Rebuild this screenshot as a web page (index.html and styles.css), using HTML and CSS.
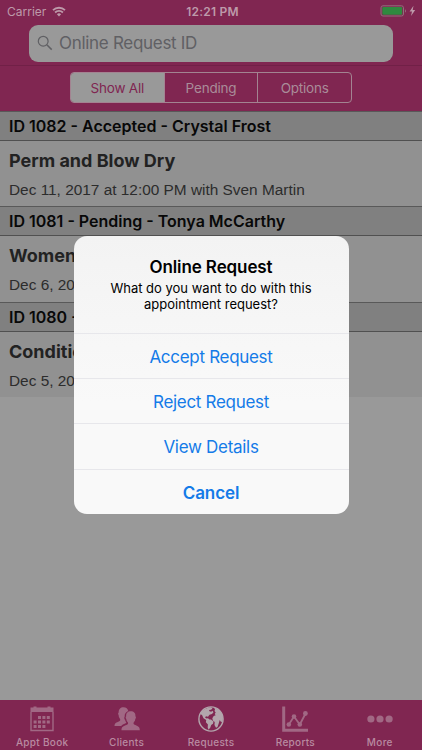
FILE: index.html
```html
<!DOCTYPE html>
<html lang="en">
<head>
    <meta charset="UTF-8">
    <meta name="viewport" content="width=device-width, initial-scale=1.0">
    <title>Online Requests</title>
    <link rel="stylesheet" href="styles.css">
</head>
<body>
    <div class="screen">
        <header class="header">
            <div class="status-bar">
                <div class="status-left">
                    <span class="carrier">Carrier</span>
                    <svg class="wifi" viewBox="0 0 14 11" width="14" height="11">
                        <path d="M1 4.2a8.6 8.6 0 0 1 12 0M3.1 6.5a5.5 5.5 0 0 1 7.8 0" fill="none" stroke="currentColor" stroke-width="1.8"/>
                        <path d="M7 10.5L4.9 8.3a3 3 0 0 1 4.2 0z" fill="currentColor"/>
                    </svg>
                </div>
                <span class="time">12:21 PM</span>
                <div class="status-right">
                    <svg viewBox="0 0 38 12" width="38" height="12">
                        <rect x="1" y=".8" width="22.5" height="10.2" rx="2" fill="none" stroke="#916f7c"/>
                        <rect x="2.3" y="2.1" width="19.9" height="7.6" rx="1" fill="#2f893f"/>
                        <path d="M25 4.2c1.3.6 1.3 2.8 0 3.4z" fill="#916f7c"/>
                        <path d="M33.5.8L29.6 6.5H32L31 11l4.2-6h-2.5z" fill="currentColor"/>
                    </svg>
                </div>
            </div>
            <div class="search">
                <svg class="search-icon" viewBox="0 0 16 16" width="16" height="16">
                    <circle cx="6.2" cy="6.2" r="4.9" fill="none" stroke="currentColor" stroke-width="1.2"/>
                    <path d="M9.8 9.8l4.9 4.8" stroke="currentColor" stroke-width="1.5"/>
                </svg>
                <span class="placeholder">Online Request ID</span>
            </div>
            <div class="filter-bar">
                <div class="segments">
                    <div class="segment active"><span>Show All</span></div>
                    <div class="segment"><span>Pending</span></div>
                    <div class="segment"><span>Options</span></div>
                </div>
            </div>
        </header>

        <main class="list">
            <h2 class="section">ID 1082 - Accepted - Crystal Frost</h2>
            <div class="row">
                <h3>Perm and Blow Dry</h3>
                <p>Dec 11, 2017 at 12:00 PM with Sven Martin</p>
            </div>
            <h2 class="section">ID 1081 - Pending - Tonya McCarthy</h2>
            <div class="row">
                <h3>Women</h3>
                <p>Dec 6, 20</p>
            </div>
            <h2 class="section">ID 1080 -</h2>
            <div class="row">
                <h3>Conditio</h3>
                <p>Dec 5, 20</p>
            </div>
        </main>

        <nav class="tab-bar">
            <div class="tab">
                <svg viewBox="0 0 26 26" width="26" height="26">
                    <path d="M1.5 1.5h3V.5h3v1h11v-1h3v1h3V6h-23z" fill="currentColor"/>
                    <path d="M2 6v18.5h22V6" fill="none" stroke="currentColor" stroke-width="1.4"/>
                    <path d="M9 10h3v3H9zm4.4 0h3v3h-3zm4.4 0h3v3h-3zM4.6 14.5h3v3h-3zm4.4 0h3v3H9zm4.4 0h3v3h-3zm4.4 0h3v3h-3zM4.6 19h3v3h-3zM9 19h3v3H9zm4.4 0h3v3h-3z" fill="currentColor"/>
                </svg>
                <span>Appt Book</span>
            </div>
            <div class="tab">
                <svg viewBox="0 0 26 26" width="26" height="26">
                    <path d="M.5 20c0-3 1.8-3.5 4.8-4.8 1-.5 1.3-1.5.6-2.5-.9-1.2-1.3-2.5-1.3-3.8-.7-.5-.7-2 .1-2.4C4.5 3.2 6.5 1.2 9.5 1.2c2.6 0 4.4 1.3 4.7 3.8-2.4 1-3.8 3-3.5 5.5-.7.9-.5 2.6.4 3.4.2 1 .6 1.8 1.2 2.5-.1 1.1-3.8 1.4-5 3.6z" fill="currentColor"/>
                    <path d="M7.5 24.2c0-3.3 1.8-4.1 5.4-5.4 1.4-.5 1.5-1.8.7-2.7-.8-1-1.2-2.1-1.3-3.2-.8-.5-.9-2.1-.1-2.6-.4-3 1.5-5 4.6-5s5 2 4.6 5c.8.5.7 2.1-.1 2.6-.1 1.1-.5 2.2-1.3 3.2-.8.9-.7 2.2.7 2.7 3.3 1.3 5.1 2.1 5.1 5.4z" fill="currentColor"/>
                </svg>
                <span>Clients</span>
            </div>
            <div class="tab selected">
                <svg viewBox="0 0 26 26" width="26" height="26">
                    <circle cx="13" cy="13" r="12.1" fill="none" stroke="currentColor" stroke-width="1.4"/>
                    <path d="M2 8C4 4 8.500 1.500 13 1.200l1.500 1.300-1.500 1.300-2 .2.500 1.300 1.700.4 1.300-1 1 1.500-1.500 1.800-2.500.7-1.500 2-2-.5-1 1.300 1.500 1 1.500-.3 1.500 1.200H13l2.500 2.200-.5 2.200-1.800 1.200-1 2.700-1.700 2-.8-2.200.2-3-2-2.300.3-2.300-2.700-1.700L4 9z" fill="currentColor"/>
                    <path d="M16 1.500c4.500 1 8.500 5 9 10l-.3 4-1.700.5-1.300-2-1 3.500-1.200 3.500-1.500.8-1.500-2.800.2-3-1.700-1.300-.7-2.500 1.400-2.200 2-.7-1-1.300 1-1.500-1.200-1.500.5-1.500z" fill="currentColor"/>
                </svg>
                <span>Requests</span>
            </div>
            <div class="tab">
                <svg viewBox="0 0 26 26" width="26" height="26">
                    <path d="M1.700.5v23.800H26" fill="none" stroke="currentColor" stroke-width="3"/>
                    <path d="M6.800 18.500l5.200-8 5.800 8L23.600 7.500" fill="none" stroke="currentColor" stroke-width="1.800"/>
                    <circle cx="6.800" cy="18.500" r="2.300" fill="currentColor"/>
                    <circle cx="12" cy="10.500" r="2.300" fill="currentColor"/>
                    <circle cx="17.800" cy="18.500" r="2.300" fill="currentColor"/>
                    <circle cx="23.400" cy="7.500" r="2.400" fill="currentColor"/>
                </svg>
                <span>Reports</span>
            </div>
            <div class="tab">
                <svg viewBox="0 0 26 26" width="26" height="26">
                    <circle cx="3.900" cy="13" r="3.600" fill="currentColor"/>
                    <circle cx="13" cy="13" r="3.600" fill="currentColor"/>
                    <circle cx="22.100" cy="13" r="3.600" fill="currentColor"/>
                </svg>
                <span>More</span>
            </div>
        </nav>
    </div>

    <div class="overlay">
        <div class="alert">
            <div class="alert-text">
                <h1>Online Request</h1>
                <p>What do you want to do with this<br>appointment request?</p>
            </div>
            <button type="button">Accept Request</button>
            <button type="button">Reject Request</button>
            <button type="button">View Details</button>
            <button type="button" class="cancel">Cancel</button>
        </div>
    </div>
</body>
</html>
```
FILE: styles.css
```css
* {
    box-sizing: border-box;
}
body {
    font-family: Inter, "Liberation Sans", sans-serif;
    margin: 0;
    overflow: hidden;
}
h1, h2, h3, p {
    margin: 0;
    white-space: nowrap;
}
svg {
    display: block;
    flex: none;
}
.screen {
    display: flex;
    flex-direction: column;
    width: 422px;
    height: 750px;
    background-color: #999;
}
.header {
    height: 110.6px;
    background-color: #802651;
}
.status-bar {
    display: grid;
    grid-template-columns: 1fr auto 1fr;
    align-items: center;
    height: 24px;
    padding: 0 4px 2px 7px;
    color: #bd9aaa;
    font-size: 12px;
}
.status-left {
    display: flex;
    align-items: center;
    gap: 6px;
}
.time {
    font-weight: 600;
    letter-spacing: 0.2px;
}
.status-right {
    display: flex;
    justify-content: flex-end;
}
.search {
    display: flex;
    align-items: center;
    gap: 6px;
    width: 364px;
    height: 37px;
    margin: 0.5px 0 0 29px;
    padding-left: 8px;
    border-radius: 9px;
    background-color: #999;
    color: #606064;
    font-size: 17px;
    letter-spacing: -0.3px;
}
.filter-bar {
    display: flex;
    justify-content: center;
    margin-top: 3.5px;
    padding-top: 6px;
    border-top: 1px solid #712047;
}
.segments {
    display: flex;
    width: 282px;
    height: 31px;
    border: 1px solid #a38391;
    border-radius: 4px;
    overflow: hidden;
}
.segment {
    display: flex;
    flex: 1;
    align-items: center;
    justify-content: center;
    color: #a98c99;
    font-size: 13.5px;
    letter-spacing: -0.2px;
}
.segment + .segment {
    border-left: 1px solid #a38391;
}
.segment.active {
    background-color: #999;
    color: #802651;
}
.list {
    flex: 1;
}
.section {
    display: flex;
    align-items: center;
    height: 30px;
    padding-left: 9px;
    border-top: 1.5px solid #595959;
    border-bottom: 1.5px solid #505050;
    background-color: #808080;
    color: #080808;
    font-size: 16px;
    font-weight: 600;
}
.row {
    height: 65.6px;
    padding: 9px 0 0 9px;
    background-color: #919191;
}
.row h3 {
    color: #222;
    font-size: 18px;
    font-weight: 700;
    line-height: 22px;
}
.row p {
    margin-top: 8px;
    color: #2c2c2c;
    font-family: "Liberation Sans", sans-serif;
    font-size: 15.4px;
    line-height: 20px;
}
.tab-bar {
    display: flex;
    height: 50px;
    background-color: #802651;
}
.tab {
    display: flex;
    flex: 1;
    flex-direction: column;
    align-items: center;
    padding-top: 6px;
    color: #a16884;
    font-size: 10px;
    font-weight: 500;
    line-height: 12px;
}
.tab span {
    margin-top: 4px;
    color: #b98ba1;
    letter-spacing: 0.3px;
}
.tab.selected {
    color: #b3a5ac;
}
.overlay {
    position: absolute;
    inset: 0;
    display: flex;
    justify-content: center;
    align-items: center;
}
.alert {
    width: 275px;
    height: 278px;
    border-radius: 13px;
    background: linear-gradient(#f3f3f3, #f9f9f9 60%);
    overflow: hidden;
    text-align: center;
}
.alert-text {
    height: 97px;
    padding-top: 20px;
}
.alert-text h1 {
    font-size: 17px;
    font-weight: 600;
    line-height: 22px;
    letter-spacing: -0.1px;
}
.alert-text p {
    font-size: 13px;
    line-height: 16px;
    margin-top: 1.5px;
}
.alert button {
    display: block;
    width: 100%;
    height: 45.2px;
    padding: 2px 0 0;
    border: none;
    border-top: 1px solid #e7e7eb;
    background: none;
    color: #147be8;
    font-family: inherit;
    font-size: 17px;
    letter-spacing: -0.3px;
}
.alert .cancel {
    font-weight: 600;
    letter-spacing: -0.1px;
}
```
